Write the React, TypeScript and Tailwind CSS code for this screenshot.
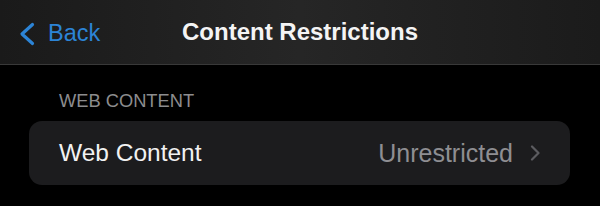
import React from "react";

const font = { fontFamily: '"Liberation Sans", Arial, sans-serif' };

const BackChevron = () => (
    <svg width="18" height="24" viewBox="0 0 18 24" fill="none" className="shrink-0">
        <path d="M14.5 2.5 L4 12 L14.5 21.5" stroke="#2c84d6" strokeWidth="3.2" strokeLinecap="round" strokeLinejoin="round" />
    </svg>
);

const RowChevron = () => (
    <svg width="10" height="16" viewBox="0 0 10 16" fill="none" className="shrink-0">
        <path d="M2 1.5 L8.5 8 L2 14.5" stroke="#5c5c60" strokeWidth="2.2" strokeLinecap="round" strokeLinejoin="round" />
    </svg>
);

export default function App() {
    return (
        <div className="w-[600px] h-[206px] bg-black flex flex-col overflow-hidden" style={font}>
            <div className="h-[65px] shrink-0 border-b border-[#393939] bg-gradient-to-r from-[#1a1a1a] via-[#262626] to-[#1b1b1b] grid grid-cols-[1fr_auto_1fr] items-center">
                <div className="flex items-center gap-[12px] pl-[18px] pt-[4px]">
                    <BackChevron />
                    <span className="text-[23.5px] text-[#2c84d6] leading-none">Back</span>
                </div>
                <div className="text-[24px] font-bold text-[#f4f4f4] leading-none">Content Restrictions</div>
                <div />
            </div>

            <div className="pt-[27px] pl-[59px] text-[18.3px] leading-[18px] text-[#8c8c8e]">WEB CONTENT</div>

            <div className="mt-[11px] ml-[29px] mr-[30px] h-[64px] rounded-[13px] bg-[#1c1c1e] flex items-center px-[30px]">
                <span className="text-[24.5px] text-[#f2f2f2] leading-none">Web Content</span>
                <div className="ml-auto flex items-center gap-[17px]">
                    <span className="text-[25px] text-[#8e8e92] leading-none">Unrestricted</span>
                    <RowChevron />
                </div>
            </div>
        </div>
    );
}
